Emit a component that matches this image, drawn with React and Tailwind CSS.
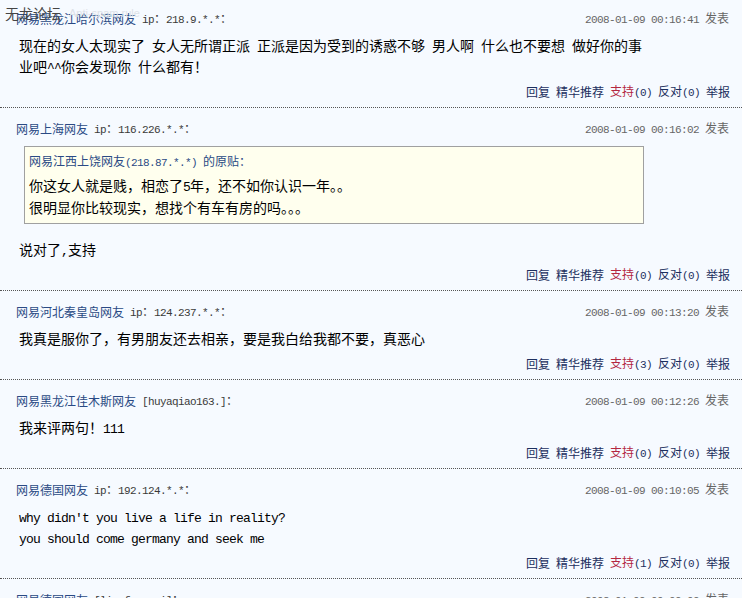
const posts = [
  {
    name: "网易黑龙江哈尔滨网友",
    meta: "ip：218.9.*.*：",
    time: "2008-01-09 00:16:41",
    lines: [
      "现在的女人太现实了 女人无所谓正派 正派是因为受到的诱惑不够 男人啊 什么也不要想 做好你的事",
      "业吧^^你会发现你 什么都有！"
    ],
    support: 0,
    oppose: 0
  },
  {
    name: "网易上海网友",
    meta: "ip：116.226.*.*：",
    time: "2008-01-09 00:16:02",
    quote: {
      from: "网易江西上饶网友(218.87.*.*) 的原贴：",
      lines: ["你这女人就是贱，相恋了5年，还不如你认识一年。。", "很明显你比较现实，想找个有车有房的吗。。。"]
    },
    lines: ["说对了,支持"],
    support: 0,
    oppose: 0
  },
  {
    name: "网易河北秦皇岛网友",
    meta: "ip：124.237.*.*：",
    time: "2008-01-09 00:13:20",
    lines: ["我真是服你了，有男朋友还去相亲，要是我白给我都不要，真恶心"],
    support: 3,
    oppose: 0
  },
  {
    name: "网易黑龙江佳木斯网友",
    meta: "[huyaqiao163.]：",
    time: "2008-01-09 00:12:26",
    lines: ["我来评两句！111"],
    support: 0,
    oppose: 0
  },
  {
    name: "网易德国网友",
    meta: "ip：192.124.*.*：",
    time: "2008-01-09 00:10:05",
    lines: ["why didn't you live a life in reality?", "you should come germany and seek me"],
    support: 1,
    oppose: 0
  },
  {
    name: "网易德国网友",
    meta: "[limofengsui]：",
    time: "2008-01-09 00:09:09",
    lines: ["..."],
    support: 0,
    oppose: 0
  }
];

// ascii runs get a narrow mono font, like the old bitmap song font
function Mixed({ text, small }) {
  const parts = text.split(/([\x20-\x7e]+)/);
  return parts.map((part, i) => {
    if (!part) return null;
    if (/^[\x20-\x7e]+$/.test(part)) {
      return (
        <span
          key={i}
          className={
            small
              ? "font-['Liberation_Mono'] text-[11px] tracking-[-0.6px] whitespace-pre"
              : "font-['Liberation_Mono'] text-[13px] tracking-[-0.8px] whitespace-pre"
          }
        >
          {part}
        </span>
      );
    }
    return <span key={i}>{part}</span>;
  });
}

function Actions({ support, oppose }) {
  return (
    <div className="mt-[7px] flex h-4 items-center justify-end gap-[6px] pr-[12px] text-[12px] leading-4 text-[#1c2f5e]">
      <span>回复</span>
      <span>精华推荐</span>
      <span>
        <span className="text-[#b3263f]">支持</span>
        <Mixed text={`(${support})`} small />
      </span>
      <span>
        反对
        <Mixed text={`(${oppose})`} small />
      </span>
      <span>举报</span>
    </div>
  );
}

function Post({ post, first }) {
  return (
    <div className={`border-b border-dotted border-[#555] pb-[7px] ${first ? "pt-[10px]" : "pt-3"}`}>
      <div className="flex h-4 items-center justify-between pl-4 pr-[13px] pt-[1px] text-[12px] leading-4">
        <div className="flex items-center gap-[6px]">
          <span className="text-[#2a4a84]">{post.name}</span>
          <span className="text-[#3a3a3a]">
            <Mixed text={post.meta} small />
          </span>
        </div>
        <div className="text-[#666]">
          <Mixed text={post.time + " "} small />
          发表
        </div>
      </div>

      {post.quote ? (
        <div className="ml-6 mt-[10px] w-[620px] border border-[#a0a0a0] bg-[#ffffee] pb-[5px] pl-1 pt-[6px]">
          <div className="h-4 text-[12px] leading-4 text-[#2a4a84]">
            <Mixed text={post.quote.from} small />
          </div>
          <div className="mt-[5px] text-[14px] leading-[22px] text-black">
            {post.quote.lines.map((line, i) => (
              <div key={i} className="h-[22px]">
                <Mixed text={line} />
              </div>
            ))}
          </div>
        </div>
      ) : null}

      <div className={`${post.quote ? "mt-[15px]" : "mt-[9px]"} pl-[19px] text-[14px] leading-[21px] text-black`}>
        {post.lines.map((line, i) => (
          <div key={i} className="h-[21px] whitespace-nowrap">
            <Mixed text={line} />
          </div>
        ))}
      </div>

      <Actions support={post.support} oppose={post.oppose} />
    </div>
  );
}

export default function App() {
  return (
    <div className="relative h-[598px] w-[742px] overflow-hidden bg-[#f6faff] font-['Noto_Sans_CJK_SC',sans-serif]">
      {posts.map((post, i) => (
        <Post key={i} post={post} first={i === 0} />
      ))}

      <div className="absolute left-[5px] top-[5px] flex items-center gap-2">
        <span className="text-[14px] leading-4 text-[#444]">无龙论坛</span>
        <span className="font-['Liberation_Sans'] text-[11px] text-[#dde2e8]">Anti-spam rule</span>
      </div>
    </div>
  );
}
